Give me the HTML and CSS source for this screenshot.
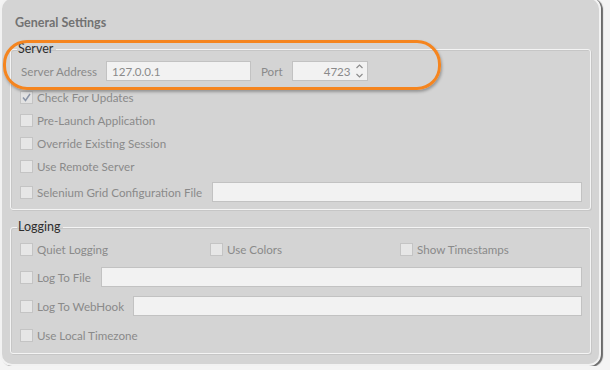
FILE: index.html
```html
<!DOCTYPE html>
<html lang="en">
<head>
    <meta charset="UTF-8">
    <title>General Settings</title>
    <link rel="stylesheet" href="styles.css">
</head>
<body>
    <div class="window">
        <h1 class="title">General Settings</h1>

        <fieldset class="group server">
            <legend>Server</legend>
            <div class="address-row">
                <span class="field-label">Server Address</span>
                <input type="text" class="text-input address" value="127.0.0.1">
                <span class="field-label port-label">Port</span>
                <div class="spin-box">
                    <input type="text" class="text-input port" value="4723">
                    <svg class="spinner" width="9" height="18" viewBox="0 0 9 18">
                        <path d="M1.5 6 L4.5 3 L7.5 6" fill="none" stroke="#8c8c8c" stroke-width="1.2"/>
                        <path d="M1.5 12 L4.5 15 L7.5 12" fill="none" stroke="#8c8c8c" stroke-width="1.2"/>
                    </svg>
                </div>
            </div>
            <label class="check"><span class="box checked">
                <svg width="11" height="11" viewBox="0 0 11 11"><path d="M2 5.5 L4.5 8.5 L9 2" fill="none" stroke="#8a94a6" stroke-width="1.5"/></svg>
            </span>Check For Updates</label>
            <label class="check"><span class="box"></span>Pre-Launch Application</label>
            <label class="check"><span class="box"></span>Override Existing Session</label>
            <label class="check"><span class="box"></span>Use Remote Server</label>
            <div class="input-row selenium">
                <label class="check"><span class="box"></span>Selenium Grid Configuration File</label>
                <input type="text" class="text-input grow">
            </div>
        </fieldset>

        <fieldset class="group logging">
            <legend>Logging</legend>
            <div class="option-grid">
                <label class="check"><span class="box"></span>Quiet Logging</label>
                <label class="check"><span class="box"></span>Use Colors</label>
                <label class="check"><span class="box"></span>Show Timestamps</label>
            </div>
            <div class="input-row log-file">
                <label class="check"><span class="box"></span>Log To File</label>
                <input type="text" class="text-input grow">
            </div>
            <div class="input-row log-hook">
                <label class="check"><span class="box"></span>Log To WebHook</label>
                <input type="text" class="text-input grow">
            </div>
            <label class="check timezone"><span class="box"></span>Use Local Timezone</label>
        </fieldset>

        <div class="highlight"></div>
    </div>
</body>
</html>
```

FILE: styles.css
```css
/* Basis */
body {
    margin: 0;
    background: #f4f4f4;
    font-family: 'Lato', 'Segoe UI', sans-serif;
    font-size: 11.6px;
    color: #8a8a8a;
    overflow: hidden;
}

/* Fenster */
.window {
    position: relative;
    box-sizing: border-box;
    width: 601px;
    height: 369px;
    margin-top: -3px;
    padding-top: 16px;
    background: #d4d4d4;
    border: 2px solid #f2f2f2;
    border-radius: 12px;
    box-shadow: 2px 1px 1px #6a6a6a;
    display: flex;
    flex-direction: column;
}

.title {
    margin: 0 0 10px 13px;
    font-size: 12.5px;
    line-height: 16px;
    font-weight: bold;
    color: #727272;
}

/* Gruppen */
.group {
    margin: 0 8px;
    padding: 4px 8px 7px 9px;
    border: 1px solid #f4f4f4;
    border-radius: 3px;
    box-shadow: inset 1px 1px 0 #c6c6c6, 1px 1px 0 #c6c6c6;
    display: flex;
    flex-direction: column;
}

.group legend {
    padding: 0 3px 0 1px;
    margin-left: -3px;
    line-height: 16px;
    font-size: 12.5px;
    color: #2e2e2e;
}

.logging {
    margin-top: 9px;
    padding-top: 3px;
    padding-bottom: 6px;
}

/* Eingabefelder */
.text-input {
    box-sizing: border-box;
    height: 20px;
    padding: 0 5px;
    border: 1px solid #c2c2c2;
    background: #f2f2f2;
    font-family: inherit;
    font-size: 11.6px;
    color: #8a8a8a;
    outline: none;
}

.grow {
    flex: 1;
    min-width: 0;
}

.address-row {
    display: flex;
    align-items: center;
    height: 20px;
    margin-bottom: 5px;
}

.field-label {
    margin-left: 1px;
}

.address {
    width: 145px;
    margin-left: 9px;
}

.port-label {
    margin-left: 10px;
}

.spin-box {
    display: flex;
    align-items: center;
    box-sizing: border-box;
    width: 76px;
    height: 20px;
    margin-left: 9px;
    border: 1px solid #c2c2c2;
    background: #f2f2f2;
}

.port {
    width: 60px;
    height: 18px;
    border: none;
    text-align: right;
    padding-right: 2px;
}

.spinner {
    margin-left: 2px;
}

/* Checkboxen */
.check {
    display: flex;
    align-items: center;
    height: 23px;
    white-space: nowrap;
}

.box {
    box-sizing: border-box;
    width: 13px;
    height: 13px;
    margin-right: 4px;
    border: 1px solid #c4c4c4;
    background: #e6e6e6;
    display: flex;
    align-items: center;
    justify-content: center;
}

.box.checked {
    background: #e2e2e2;
}

.input-row {
    display: flex;
    align-items: center;
    gap: 10px;
    height: 20px;
}

.selenium {
    margin-top: 4px;
}

.option-grid {
    display: grid;
    grid-template-columns: 190px 190px 1fr;
}

.log-file {
    margin-top: 6px;
}

.log-hook {
    margin-top: 9px;
    gap: 9px;
}

.timezone {
    margin-top: 8px;
}

/* Markierung um den Server-Bereich */
.highlight {
    position: absolute;
    left: 1px;
    top: 41px;
    width: 438px;
    height: 50px;
    box-sizing: border-box;
    border: 3px solid #f5851f;
    border-radius: 24px;
    box-shadow: 1px 2px 3px rgba(0, 0, 0, 0.3);
}
```
